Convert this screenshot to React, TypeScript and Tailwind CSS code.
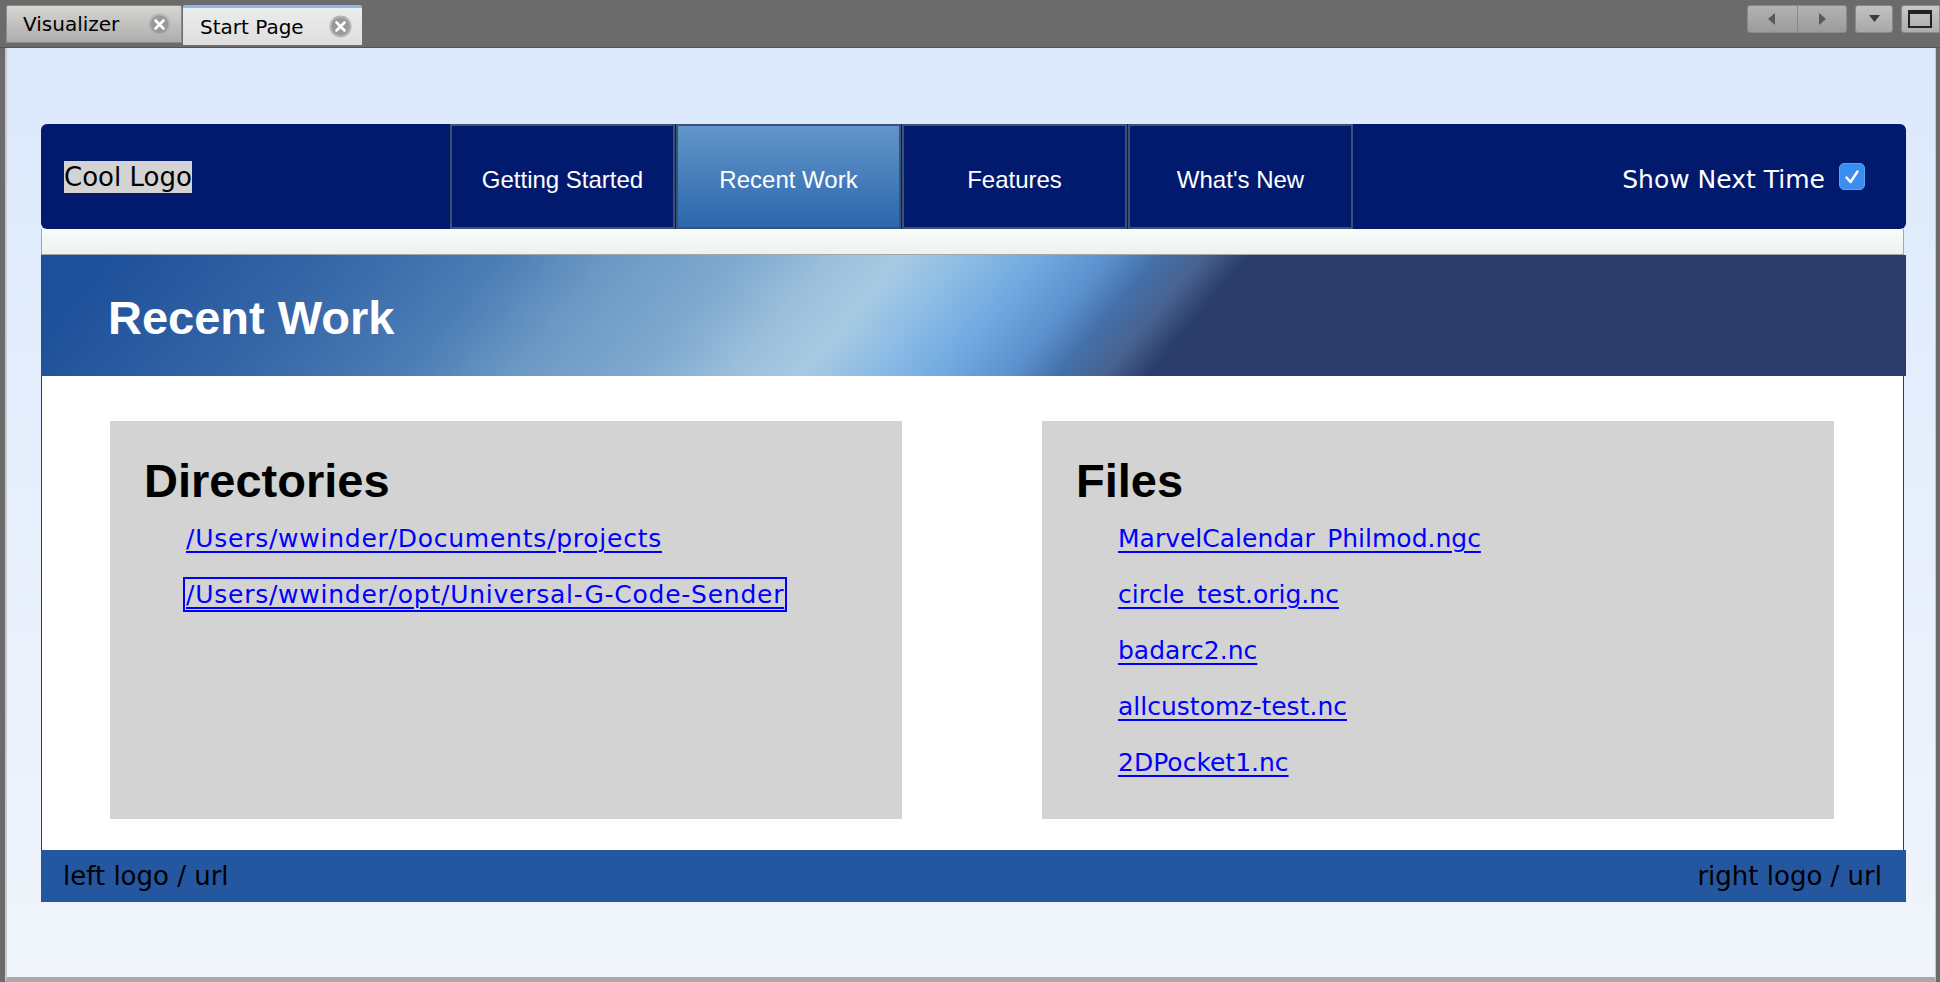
import React from "react";

function CloseIcon() {
  return (
    <svg width="23" height="23" viewBox="0 0 23 23">
      <circle cx="11.5" cy="11.5" r="11" fill="#b4b4b4" />
      <circle cx="11.5" cy="11.5" r="9" fill="#999999" />
      <path d="M7.5 7.5 L15.5 15.5 M15.5 7.5 L7.5 15.5" stroke="#ffffff" strokeWidth="2.6" strokeLinecap="round" />
    </svg>
  );
}

function NavButton({ label, active, first }: { label: string; active?: boolean; first?: boolean }) {
  return (
    <div
      className={
        (active
          ? "bg-gradient-to-b from-[#6296c9] to-[#2c67ad] "
          : "bg-[#021a6e] ") +
        (first ? "" : "ml-[1px] ") +
        "w-[225px] h-full border-2 border-[#3b5274] flex items-center justify-center pt-[6px] text-white text-[24px] font-['Liberation_Sans',Arial,sans-serif]"
      }
    >
      {label}
    </div>
  );
}

function LinkRow({ text, focused, dir }: { text: string; focused?: boolean; dir?: boolean }) {
  return (
    <div className="h-[56px] leading-[56px] text-[25px] font-['DejaVu_Sans',sans-serif] whitespace-nowrap">
      <a
        href="#"
        className={
          "text-[#0000ff] underline decoration-[2px] underline-offset-[4px] " +
          (dir ? "tracking-[0.75px] " : "") +
          (focused ? "outline-2 outline-solid outline-[#0000ff] outline-offset-[1px]" : "")
        }
      >
        {text}
      </a>
    </div>
  );
}

function Panel({ title, items, dir }: { title: string; items: string[]; dir?: boolean }) {
  return (
    <div className="w-[792px] h-[398px] bg-[#d3d3d3] pt-[33px] pl-[34px]">
      <h2 className="text-[47px] leading-[54px] font-bold text-black font-['Liberation_Sans',Arial,sans-serif]">
        {title}
      </h2>
      <div className="mt-[3px] pl-[42px]">
        {items.map((t, i) => (
          <LinkRow key={t} text={t} dir={dir} focused={dir && i === 1} />
        ))}
      </div>
    </div>
  );
}

export default function App() {
  return (
    <div className="w-[1940px] h-[982px] bg-[#6b6b6b] flex flex-col overflow-hidden font-['DejaVu_Sans',sans-serif]">
      {/* Tab bar */}
      <div className="h-[48px] flex items-start pt-[5px] border-b border-[#555555]">
        <div className="ml-[6px] w-[176px] h-[38px] bg-gradient-to-b from-[#d6d6d1] to-[#adadad] border border-[#8c8c8c] rounded-t-[2px] flex items-center justify-between pl-[16px] pr-[10px]">
          <span className="text-[20px] text-black">Visualizer</span>
          <CloseIcon />
        </div>
        <div className="ml-[1px] w-[179px] h-[40px] bg-gradient-to-b from-[#ececec] to-[#dedede] border-t-[3px] border-[#8db7ec] rounded-t-[2px] flex items-center justify-between pl-[17px] pr-[10px]">
          <span className="text-[20px] text-black">Start Page</span>
          <CloseIcon />
        </div>
        <div className="flex-1" />
        <div className="flex gap-[8px]">
          <div className="w-[100px] h-[28px] flex rounded-[3px] border border-[#8a8a8a] bg-gradient-to-b from-[#b2b2b2] to-[#9c9c9c]">
            <div className="flex-1 flex items-center justify-center border-r border-[#8a8a8a]">
              <svg width="8" height="12" viewBox="0 0 8 12">
                <path d="M7 0 L0 6 L7 12 Z" fill="#5a5a5a" />
              </svg>
            </div>
            <div className="flex-1 flex items-center justify-center">
              <svg width="8" height="12" viewBox="0 0 8 12">
                <path d="M1 0 L8 6 L1 12 Z" fill="#5a5a5a" />
              </svg>
            </div>
          </div>
          <div className="w-[38px] h-[28px] rounded-[3px] border border-[#8a8a8a] bg-gradient-to-b from-[#c2c2c2] to-[#a8a8a8] flex items-center justify-center">
            <svg width="11" height="8" viewBox="0 0 11 8">
              <path d="M0 0 L11 0 L5.5 7 Z" fill="#3c3c3c" />
            </svg>
          </div>
          <div className="w-[39px] h-[28px] rounded-l-[3px] border border-[#8a8a8a] bg-gradient-to-b from-[#c8c8c8] to-[#adadad] flex items-center pl-[6px]">
            <div className="w-[24px] h-[18px] border-2 border-t-[4px] border-[#222222]" />
          </div>
        </div>
      </div>

      {/* Content */}
      <div className="flex-1 ml-[5px] mr-[4px] border-l-2 border-r border-[#c4c8d0] border-b-[5px] border-b-[#a9a9a9] bg-gradient-to-b from-[#dce9fc] to-[#f1f5fb] pt-[76px] pl-[34px] pr-[29px]">
        <div className="w-[1865px] flex flex-col">
          {/* Header */}
          <div className="h-[105px] rounded-[6px] bg-[#021a6e] flex items-stretch">
            <div className="w-[409px] flex items-center pl-[23px]">
              <span className="bg-[#d3d3d3] text-black text-[26px] leading-[32px]">Cool Logo</span>
            </div>
            <NavButton label="Getting Started" first />
            <NavButton label="Recent Work" active />
            <NavButton label="Features" />
            <NavButton label="What's New" />
            <div className="flex-1 flex items-center justify-end pr-[41px] gap-[14px]">
              <span className="pt-[6px] text-white text-[25px]">Show Next Time</span>
              <div className="w-[26px] h-[27px] rounded-[5px] bg-[#3a8ef0] border border-[#5aa2f2] flex items-center justify-center">
                <svg width="18" height="18" viewBox="0 0 18 18">
                  <path d="M3.5 9.5 L7.5 14 L14.5 3.5" stroke="#ffffff" strokeWidth="2.4" fill="none" strokeLinecap="round" strokeLinejoin="round" />
                </svg>
              </div>
            </div>
          </div>

          {/* Strip */}
          <div className="h-[26px] mr-[2px] border-x border-b border-[#a6a6a6] bg-gradient-to-b from-[#f8fcf9] to-[#edf1f3]" />

          {/* Banner */}
          <div className="h-[121px] pl-[67px] pt-[36px] bg-[linear-gradient(130deg,#1d4f9a_40px,#3768a8_237px,#4b7db5_352px,#6b98c4_437px,#80aacf_540px,#9cc0dc_608px,#a7cae3_660px,#8cbce5_712px,#6fa8e0_770px,#5a8fcc_822px,#4470aa_856px,#48628f_892px,#2b3d6b_925px,#2b3c6a_100%)]">
            <h1 className="text-white font-bold text-[47px] leading-[54px] font-['Liberation_Sans',Arial,sans-serif]">
              Recent Work
            </h1>
          </div>

          {/* White area */}
          <div className="mr-[2px] bg-white border-x border-[#2b3c6a] flex gap-[140px] pl-[68px] pt-[45px] pb-[31px]">
            <Panel
              title="Directories"
              dir
              items={["/Users/wwinder/Documents/projects", "/Users/wwinder/opt/Universal-G-Code-Sender"]}
            />
            <Panel
              title="Files"
              items={[
                "MarvelCalendar_Philmod.ngc",
                "circle_test.orig.nc",
                "badarc2.nc",
                "allcustomz-test.nc",
                "2DPocket1.nc",
              ]}
            />
          </div>

          {/* Footer */}
          <div className="h-[52px] bg-[#2457a0] flex items-center justify-between pl-[22px] pr-[24px] text-[26px] leading-[52px] text-black">
            <span>left logo / url</span>
            <span>right logo / url</span>
          </div>
        </div>
      </div>
    </div>
  );
}
